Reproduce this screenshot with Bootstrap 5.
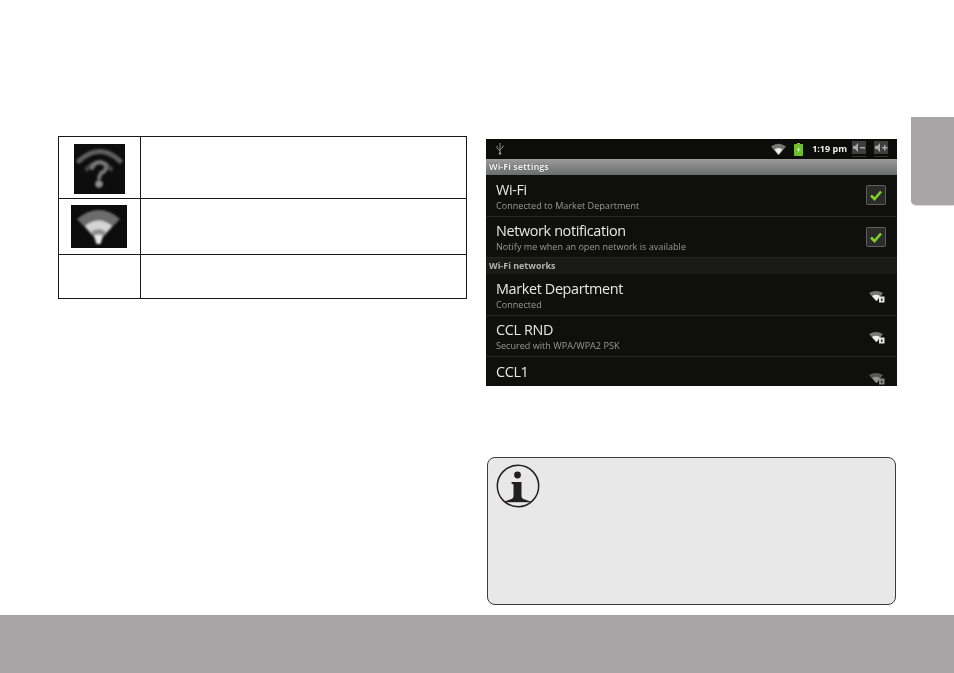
<!DOCTYPE html>
<html lang="en">
<head>
<meta charset="utf-8">
<title>Wi-Fi settings</title>
<link rel="stylesheet" href="https://cdn.jsdelivr.net/npm/bootstrap@5.3.0/dist/css/bootstrap.min.css">
<style>
html,body{height:673px;overflow:hidden;background:#fff;}
body{font-family:"Open Sans","Noto Sans",sans-serif;}
.page-main{height:615px;}
.col-left{width:409px;margin-left:58px;padding-top:136px;}
.col-right{width:411px;margin-left:19px;padding-top:139px;}
.side-tab{width:43px;height:88px;margin-left:14px;margin-top:117px;background:#a7a5a6;border-radius:0 0 0 5px;box-shadow:0 1px 1px #d8d8d8;}
.page-foot{height:58px;background:#a7a5a6;}
.doc-table{width:409px;margin:0;border-collapse:collapse;table-layout:fixed;}
.doc-table td{border:1px solid #1a1718;padding:0;background:#fff;}
.cell-icon{width:82px;}
.r1{height:62px;}.r2{height:56px;}.r3{height:44px;}
.ic1{display:block;width:51px;height:50px;margin:2px 0 0 14.5px;}
.ic2{display:block;width:56px;height:43px;margin:0 0 1px 12px;}
.droid{width:411px;height:247px;background:#0f0f0e;overflow:hidden;color:#fff;filter:blur(.35px);}
.status{height:20px;background:#0c0c0b;padding:0 9px 0 10px;}
.clock{font-size:9px;font-weight:700;color:#eee;line-height:20px;margin:0 5px 0 9px;}
.sec-a{height:16px;background:linear-gradient(#9b9b9b,#6c6d6d);font-size:8.95px;font-weight:700;line-height:16px;padding-left:3px;color:#f2f2f2;text-shadow:0 0 1px #222;}
.sec-b{height:16px;background:#1a1a19;font-size:8.95px;font-weight:700;line-height:16px;padding-left:3px;color:#b4b4b4;}
.item{height:41.5px;padding:0 11px 0 10px;border-bottom:1px solid #262625;overflow:hidden;}
.item-last{border-bottom:0;height:30px;align-items:flex-start!important;}
.txt{align-self:flex-start;padding-top:4.5px;}
.ttl{font-size:14.4px;letter-spacing:-.36px;line-height:19px;color:#e8e8e8;}
.sub{font-size:9.1px;line-height:13px;color:#999;white-space:nowrap;}
.chk{display:block;width:20px;height:20px;}
.lock{display:block;width:16px;height:13px;margin-right:1px;margin-top:4px;}
.item-last .lock{margin-top:15px;opacity:.7;}
.note{width:409px;height:148px;margin:71px 0 0 1px;background:#e8e8e8;border:1px solid #3c3a3b;border-radius:8px;padding:6px 8px;}
.note svg{display:block;width:44px;height:44px;}
.sb-ic{display:block;}
</style>
</head>
<body class="m-0">
<div class="page-main d-flex align-items-start">
  <div class="col-left">
    <table class="doc-table">
      <tr class="r1">
        <td class="cell-icon">
          <svg class="ic1" viewBox="0 0 51 50" aria-hidden="true">
            <defs><filter id="b1"><feGaussianBlur stdDeviation="1.3"/></filter></defs>
            <rect width="51" height="50" fill="#0d0d0d"/>
            <g filter="url(#b1)" fill="none" stroke-linecap="round">
              <path d="M5 17Q26 -2 46 17" stroke="#5e5e5e" stroke-width="5"/>
              <path d="M13 25Q25 12 37 25" stroke="#474747" stroke-width="4.500"/>
              <path d="M18 24Q21 18 26 18Q33 19 32 24Q31 28 27 29L25 34" stroke="#777" stroke-width="4"/>
              <circle cx="25" cy="40" r="3.800" fill="#8e8e8e"/>
            </g>
          </svg>
        </td>
        <td></td>
      </tr>
      <tr class="r2">
        <td class="cell-icon">
          <svg class="ic2" viewBox="0 0 56 43" aria-hidden="true">
            <defs><filter id="b2"><feGaussianBlur stdDeviation="1"/></filter></defs>
            <rect width="56" height="43" fill="#0c0c0c"/>
            <g filter="url(#b2)">
              <path d="M6 14Q28 -4 49 14L34 30H21Z" fill="#6c6c6c"/>
              <path d="M14 21Q28 10 41 21L31 33H24Z" fill="#d4d4d4"/>
              <path d="M20 27Q28 21 35 27L30 34H25Z" fill="#8d8d8d"/>
              <path d="M23 31Q28 28 32 31L29.500 39H25.500Z" fill="#e8e8e8"/>
            </g>
          </svg>
        </td>
        <td></td>
      </tr>
      <tr class="r3"><td class="cell-icon"></td><td></td></tr>
    </table>
  </div>
  <div class="col-right">
    <div class="droid">
      <div class="status d-flex align-items-center">
        <svg class="sb-ic" width="8" height="12" viewBox="0 0 8 12" aria-hidden="true"><path d="M4 0V11M4 8L1 5V3M4 6.500L7 4V2.500" stroke="#8f8f8f" fill="none"/><circle cx="4" cy="10.500" r="1.300" fill="#8f8f8f"/></svg>
        <div class="ms-auto d-flex align-items-center">
          <svg class="sb-ic me-2" width="15" height="12" viewBox="0 0 15 12" aria-hidden="true"><path d="M0 3.500Q7.500 -2 15 3.500L8 12H7Z" fill="#777"/><path d="M3.500 6.500Q7.500 3.500 11.500 6.500L8 11H7Z" fill="#eee"/></svg>
          <svg class="sb-ic" width="9" height="13" viewBox="0 0 9 13" aria-hidden="true"><rect x="3" width="3" height="2" fill="#7fc92e"/><rect y="1" width="9" height="12" rx="1" fill="#6fbf2a"/><path d="M5.500 3L3 7H4.500L3.500 10.500L6 6H4.500Z" fill="#e8ffd0"/></svg>
          <span class="clock">1:19 pm</span>
          <svg class="sb-ic" width="14" height="16" viewBox="0 0 14 16" aria-hidden="true"><rect width="14" height="13" fill="#3e3e3e"/><path d="M1 5H3L6 2V11L3 8H1Z" fill="#a8a8a8"/><rect x="8" y="6" width="5" height="1.500" fill="#a8a8a8"/><rect y="15" width="14" height="1" fill="#333"/></svg>
          <svg class="sb-ic ms-2" width="14" height="16" viewBox="0 0 14 16" aria-hidden="true"><rect width="14" height="13" fill="#3e3e3e"/><path d="M1 5H3L6 2V11L3 8H1Z" fill="#a8a8a8"/><path d="M8 6H10V4H11.500V6H13.500V7.500H11.500V9.500H10V7.500H8Z" fill="#a8a8a8"/><rect y="15" width="14" height="1" fill="#333"/></svg>
        </div>
      </div>
      <div class="sec-a">Wi-Fi settings</div>
      <div class="item d-flex align-items-center justify-content-between">
        <div class="txt"><div class="ttl">Wi-Fi</div><div class="sub">Connected to Market Department</div></div>
        <svg class="chk" viewBox="0 0 20 20" aria-hidden="true"><rect x=".5" y=".5" width="19" height="19" rx="1" fill="#2b2c2a" stroke="#5e5e5c"/><path d="M5 10.500L8.500 14L15 6.500" fill="none" stroke="#7fd02a" stroke-width="2.600"/></svg>
      </div>
      <div class="item d-flex align-items-center justify-content-between">
        <div class="txt"><div class="ttl">Network notification</div><div class="sub">Notify me when an open network is available</div></div>
        <svg class="chk" viewBox="0 0 20 20" aria-hidden="true"><rect x=".5" y=".5" width="19" height="19" rx="1" fill="#2b2c2a" stroke="#5e5e5c"/><path d="M5 10.500L8.500 14L15 6.500" fill="none" stroke="#7fd02a" stroke-width="2.600"/></svg>
      </div>
      <div class="sec-b">Wi-Fi networks</div>
      <div class="item d-flex align-items-center justify-content-between">
        <div class="txt"><div class="ttl">Market Department</div><div class="sub">Connected</div></div>
        <svg class="lock" viewBox="0 0 16 13" aria-hidden="true"><path d="M0 3Q7 -1 14 3L8 11H7Z" fill="#777"/><path d="M3 6Q7 3.500 11 6L8 10.500H7Z" fill="#eee"/><rect x="10" y="6.500" width="5.500" height="6" fill="#e4e4e4"/><rect x="12" y="8.500" width="1.500" height="2.500" fill="#333"/></svg>
      </div>
      <div class="item d-flex align-items-center justify-content-between">
        <div class="txt"><div class="ttl">CCL RND</div><div class="sub">Secured with WPA/WPA2 PSK</div></div>
        <svg class="lock" viewBox="0 0 16 13" aria-hidden="true"><path d="M0 3Q7 -1 14 3L8 11H7Z" fill="#777"/><path d="M3 6Q7 3.500 11 6L8 10.500H7Z" fill="#eee"/><rect x="10" y="6.500" width="5.500" height="6" fill="#e4e4e4"/><rect x="12" y="8.500" width="1.500" height="2.500" fill="#333"/></svg>
      </div>
      <div class="item item-last d-flex align-items-center justify-content-between">
        <div class="txt"><div class="ttl">CCL1</div></div>
        <svg class="lock" viewBox="0 0 16 13" aria-hidden="true"><path d="M0 3Q7 -1 14 3L8 11H7Z" fill="#777"/><path d="M3 6Q7 3.500 11 6L8 10.500H7Z" fill="#ccc"/><rect x="10" y="6.500" width="5.500" height="6" fill="#bbb"/><rect x="12" y="8.500" width="1.500" height="2.500" fill="#333"/></svg>
      </div>
    </div>
    <div class="note">
      <svg viewBox="0 0 44 44" aria-hidden="true">
        <circle cx="22" cy="22" r="20.700" fill="#e8e8e8" stroke="#231f20" stroke-width="1.500"/>
        <circle cx="21.500" cy="11" r="3.400" fill="#231f20"/>
        <path d="M15.500 18H25.500V32Q25.500 34.500 29 35.500L33 37H10L14 35.500Q17.500 34.500 17.500 32V21Q17.500 20 15.500 19.500Z" fill="#231f20"/>
        <rect x="9" y="37" width="25" height="1.200" fill="#231f20"/>
      </svg>
    </div>
  </div>
  <div class="side-tab"></div>
</div>
<div class="page-foot"></div>
<script src="https://cdn.jsdelivr.net/npm/bootstrap@5.3.0/dist/js/bootstrap.bundle.min.js"></script>
</body>
</html>
